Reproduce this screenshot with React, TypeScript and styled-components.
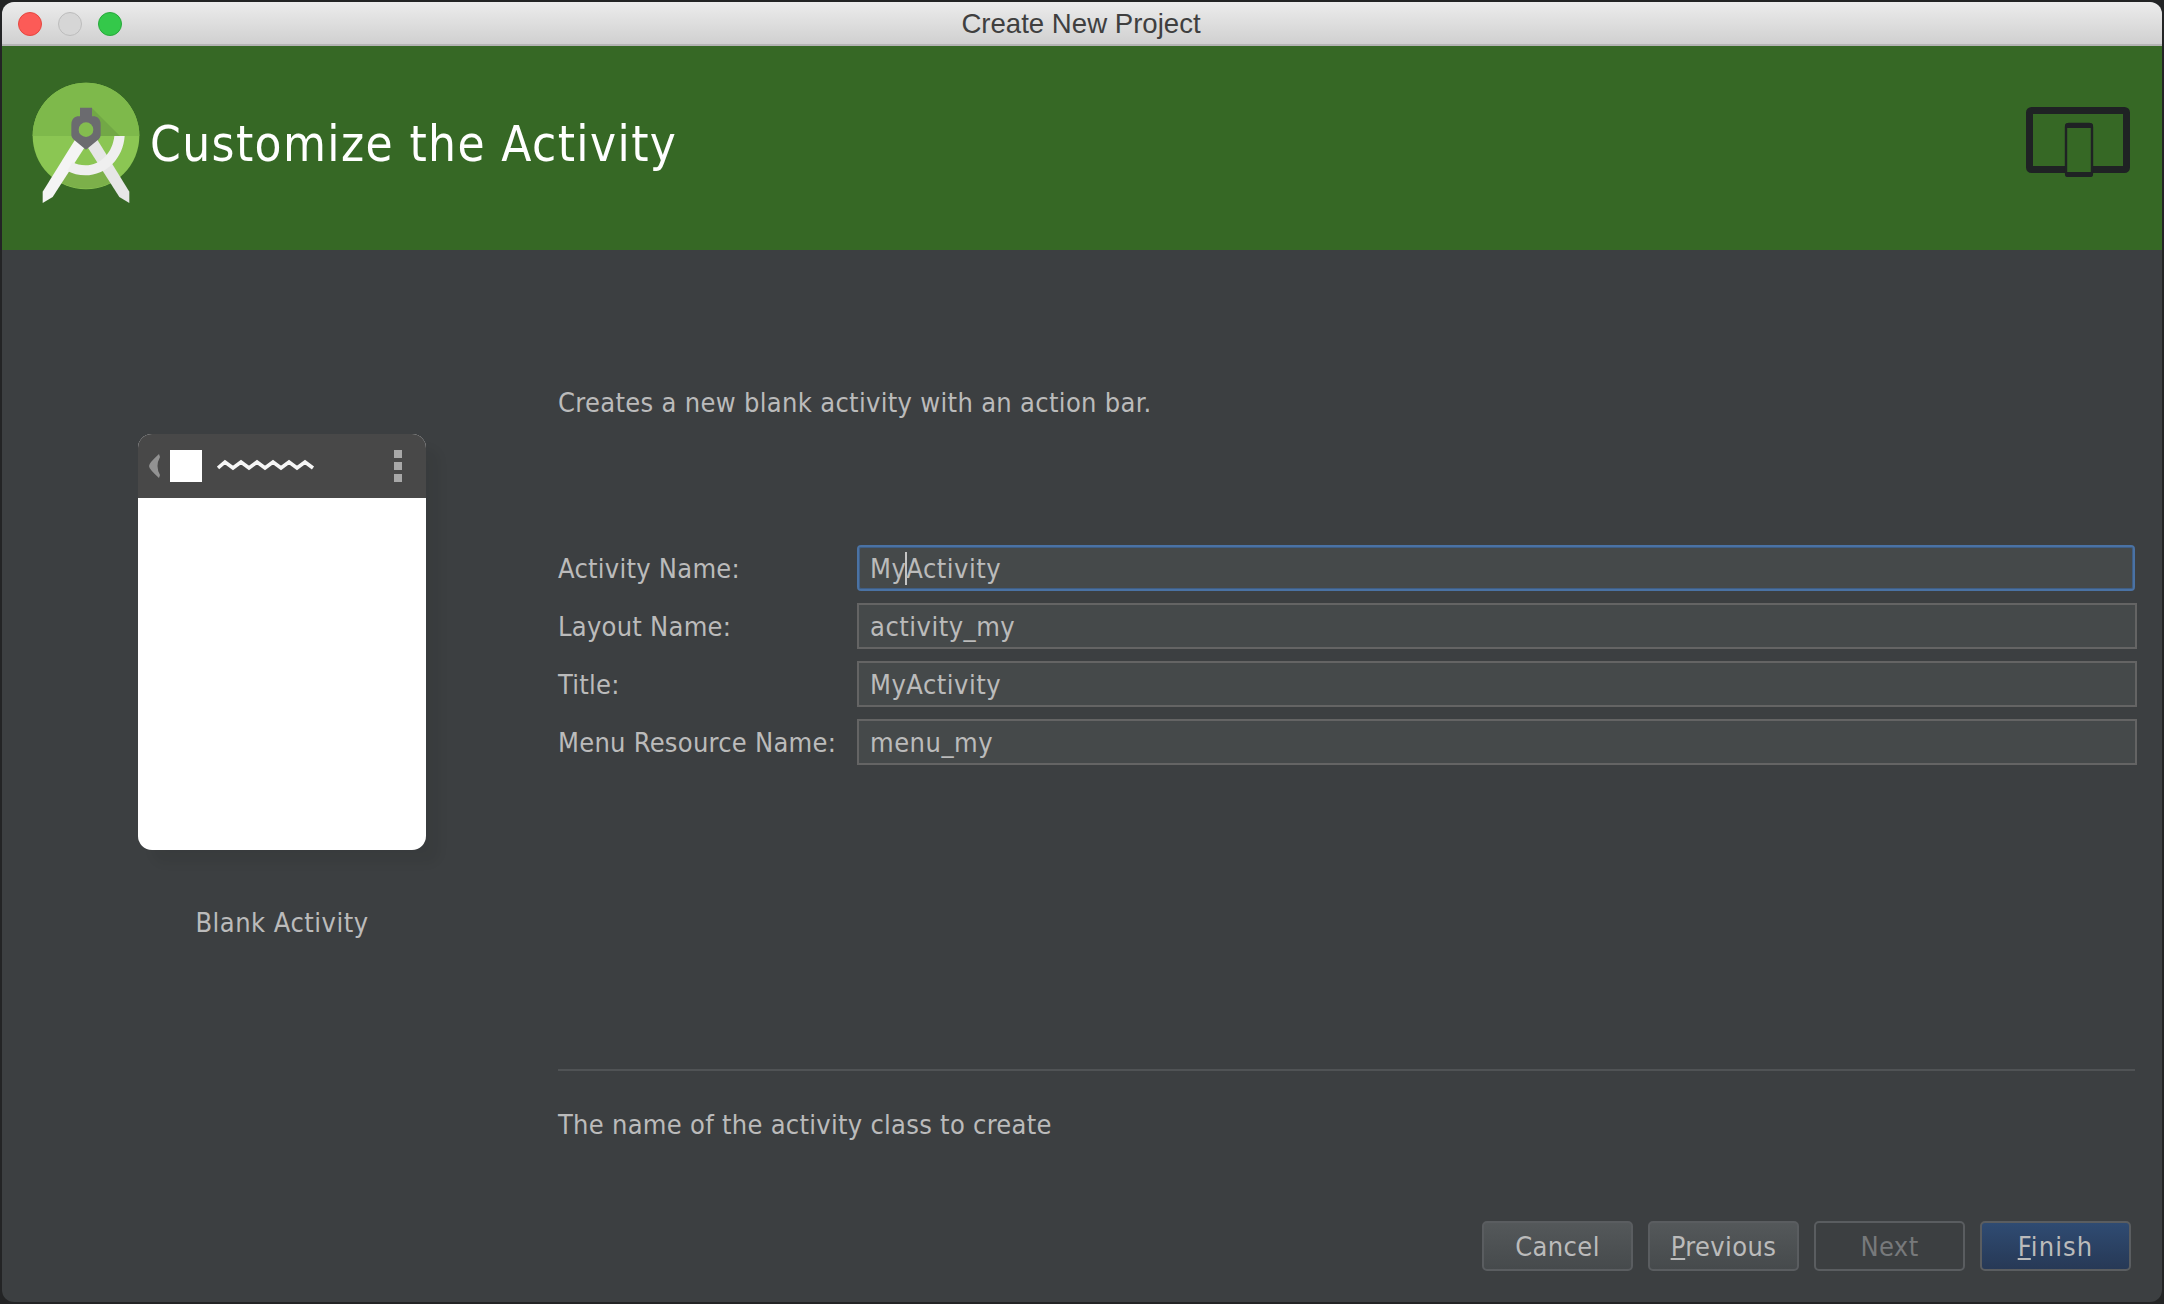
import React from "react";
import styled, { createGlobalStyle } from "styled-components";

const Global = createGlobalStyle`
  html, body { margin: 0; padding: 0; background: #232425; }
  body { width: 2164px; height: 1304px; overflow: hidden; }
`;

const uiFont = `"DejaVu Sans Condensed", "DejaVu Sans", sans-serif`;

const Desktop = styled.div`
  width: 2164px;
  height: 1304px;
  padding: 2px;
  box-sizing: border-box;
  background: #232425;
`;
const Win = styled.div`
  width: 2160px;
  height: 1300px;
  border-radius: 12px;
  overflow: hidden;
  display: flex;
  flex-direction: column;
  background: #3c3f41;
  font-family: ${uiFont};
  color: #bbbbbb;
`;
const TitleBar = styled.div`
  height: 44px;
  flex: none;
  box-sizing: border-box;
  display: grid;
  grid-template-columns: 1fr auto 1fr;
  align-items: center;
  padding: 2px 16px 0;
  background: linear-gradient(#ececec, #d0d0d0);
  border-bottom: 2px solid #b4b4b4;
`;
const Lights = styled.div`
  display: flex;
  gap: 16px;
`;
const Light = styled.span<{ $fill: string; $edge: string }>`
  width: 24px;
  height: 24px;
  box-sizing: border-box;
  border-radius: 50%;
  background: ${(p) => p.$fill};
  border: 1px solid ${(p) => p.$edge};
`;
const WinTitle = styled.div`
  font: 27.6px "Liberation Sans", Arial, sans-serif;
  color: #3f3f3f;
  margin-right: 2px;
`;
const Banner = styled.div`
  height: 204px;
  flex: none;
  display: flex;
  align-items: flex-start;
  background: #366825;
`;
const LogoSvg = styled.svg`
  width: 130px;
  height: 150px;
  margin: 25px 0 0 18px;
  flex: none;
`;
const Heading = styled.h1`
  margin: 69px 0 0;
  font: 400 49px ${uiFont};
  line-height: 60px;
  letter-spacing: 1.4px;
  color: #ffffff;
  flex: 1;
`;
const DeviceSvg = styled.svg`
  width: 104px;
  height: 70px;
  margin: 61px 32px 0 0;
  flex: none;
`;
const Body = styled.div`
  flex: 1;
  display: flex;
  min-height: 0;
`;
const Side = styled.div`
  width: 556px;
  flex: none;
  box-sizing: border-box;
  padding: 184px 0 0 136px;
`;
const Phone = styled.div`
  width: 288px;
  height: 416px;
  border-radius: 14px;
  overflow: hidden;
  display: flex;
  flex-direction: column;
  background: #ffffff;
  box-shadow: 14px 14px 10px rgba(0, 0, 0, 0.05);
`;
const PhoneBar = styled.div`
  height: 64px;
  flex: none;
  display: flex;
  align-items: center;
  box-sizing: border-box;
  padding: 0 24px 0 11px;
  background: #484848;
`;
const Chevron = styled.svg`
  width: 11px;
  height: 24px;
  flex: none;
`;
const Square = styled.div`
  width: 32px;
  height: 32px;
  margin-left: 10px;
  flex: none;
  background: #ffffff;
`;
const Wave = styled.svg`
  width: 98px;
  height: 14px;
  margin-left: 15px;
  flex: none;
`;
const Dots = styled.div`
  margin-left: auto;
  display: flex;
  flex-direction: column;
  gap: 4px;
`;
const Dot = styled.span`
  width: 8px;
  height: 8px;
  background: #a8a8a8;
`;
const Caption = styled.div`
  width: 288px;
  margin-top: 55px;
  text-align: center;
  font-size: 27px;
  line-height: 36px;
  letter-spacing: 0.5px;
`;
const Main = styled.div`
  flex: 1;
  box-sizing: border-box;
  padding: 135px 25px 31px 0;
  display: flex;
  flex-direction: column;
  min-width: 0;
`;
const Description = styled.div`
  font-size: 27px;
  line-height: 36px;
  letter-spacing: 0.32px;
`;
const Form = styled.div`
  margin-top: 124px;
  display: flex;
  flex-direction: column;
  gap: 12px;
`;
const Row = styled.div`
  display: flex;
  align-items: center;
`;
const Label = styled.div`
  width: 299px;
  flex: none;
  font-size: 27px;
  letter-spacing: 0.26px;
`;
const Field = styled.div<{ $focused?: boolean }>`
  flex: 1;
  height: 46px;
  box-sizing: border-box;
  padding: 0 11px;
  display: flex;
  align-items: center;
  font-size: 27px;
  letter-spacing: 0.5px;
  background: #45494a;
  border: 2px solid ${(p) => (p.$focused ? "#4a72a4" : "#646464")};
  border-radius: ${(p) => (p.$focused ? "4px" : "0")};
  margin-right: ${(p) => (p.$focused ? "2px" : "0")};
  ${(p) => (p.$focused ? "box-shadow: inset 0 0 0 1px #3f5e85;" : "")}
`;
const Caret = styled.span`
  display: inline-block;
  width: 0;
  height: 33px;
  border-left: 2px solid #c4c4c4;
  margin: 0 -1px;
  flex: none;
`;
const Rule = styled.div`
  height: 2px;
  margin: 304px 2px 0 0;
  background: #505355;
`;
const Help = styled.div`
  margin-top: 36px;
  font-size: 27px;
  line-height: 36px;
  letter-spacing: 0.28px;
`;
const Buttons = styled.div`
  margin-top: auto;
  padding-right: 6px;
  display: flex;
  justify-content: flex-end;
  gap: 15px;
`;
const Btn = styled.div<{ $kind?: "primary" | "disabled" }>`
  width: 151px;
  height: 50px;
  box-sizing: border-box;
  display: flex;
  align-items: center;
  justify-content: center;
  font-size: 27px;
  letter-spacing: ${(p) => (p.$kind === "primary" ? "1.1px" : "0.4px")};
  border-radius: 5px;
  border: 2px solid #5a5d60;
  color: ${(p) => (p.$kind === "disabled" ? "#77797b" : "#bbbbbb")};
  background: ${(p) =>
    p.$kind === "primary"
      ? "linear-gradient(#2f4b72, #273956)"
      : p.$kind === "disabled"
        ? "#3c3f41"
        : "linear-gradient(#54585a, #464a4c)"};
`;

function Logo() {
  return (
    <LogoSvg viewBox="0 0 390 450">
      <circle cx="198" cy="195" r="160" fill="#8bc653" />
      <path d="M38 195a160 160 0 0 1 320 0z" fill="#7eb94b" />
      <path d="M215 110 L300 195 L198 195 Z" fill="#72a846" />
      <path d="M100 320a160 160 0 0 0 196 0l-30-22H130z" fill="#7cb04a" />
      <path d="M165 206 L197 224 L98 378 L68 396 L68 362 Z" fill="#f4f4f4" />
      <path d="M232 206 L200 224 L298 378 L328 396 L328 362 Z" fill="#e6e6e6" />
      <path d="M283 195h31c-4 66-54 118-118 118-20 0-38-5-54-13l15-26c12 6 25 9 39 9 48 0 82-40 87-88z" fill="#efefef" />
      <path d="M180 110H216V136H224Q242 140 242 162V192Q242 200 236 205L198 236L160 205Q154 200 154 192V162Q154 140 172 136H180Z" fill="#6b6b6f" />
      <circle cx="198" cy="176" r="22" fill="#84bd4f" />
    </LogoSvg>
  );
}

function DeviceIcon() {
  return (
    <DeviceSvg viewBox="0 0 104 70">
      <rect x="3.5" y="3.5" width="97" height="59" rx="2" fill="none" stroke="#1f2224" strokeWidth="7" />
      <rect x="40" y="17" width="26" height="52" rx="3" fill="#366825" stroke="#1f2224" strokeWidth="2.4" />
      <rect x="39" y="16" width="28" height="5" rx="2.5" fill="#1f2224" />
      <rect x="39" y="65" width="28" height="5" rx="2.5" fill="#1f2224" />
    </DeviceSvg>
  );
}

export default function App() {
  return (
    <Desktop>
      <Global />
      <Win>
        <TitleBar>
          <Lights>
            <Light $fill="#fc5b57" $edge="#e5473f" />
            <Light $fill="#d6d6d6" $edge="#bcbcbc" />
            <Light $fill="#34c84a" $edge="#28a83b" />
          </Lights>
          <WinTitle>Create New Project</WinTitle>
        </TitleBar>
        <Banner>
          <Logo />
          <Heading>Customize the Activity</Heading>
          <DeviceIcon />
        </Banner>
        <Body>
          <Side>
            <Phone>
              <PhoneBar>
                <Chevron viewBox="0 0 11 24">
                  <path d="M10 0 L11 3 Q6 12 11 21 L10 24 Q0 15 0 12 Q0 9 10 0z" fill="#929292" />
                </Chevron>
                <Square />
                <Wave viewBox="0 0 98 14">
                  <path
                    d="M1 9 L8 3 L16 9 L24 3 L32 9 L40 3 L48 9 L56 3 L64 9 L72 3 L80 9 L88 3 L96 9"
                    fill="none"
                    stroke="#f6f6f6"
                    strokeWidth="3.6"
                  />
                </Wave>
                <Dots>
                  <Dot />
                  <Dot />
                  <Dot />
                </Dots>
              </PhoneBar>
            </Phone>
            <Caption>Blank Activity</Caption>
          </Side>
          <Main>
            <Description>Creates a new blank activity with an action bar.</Description>
            <Form>
              <Row>
                <Label>Activity Name:</Label>
                <Field $focused>
                  My
                  <Caret />
                  Activity
                </Field>
              </Row>
              <Row>
                <Label>Layout Name:</Label>
                <Field>activity_my</Field>
              </Row>
              <Row>
                <Label>Title:</Label>
                <Field>MyActivity</Field>
              </Row>
              <Row>
                <Label>Menu Resource Name:</Label>
                <Field>menu_my</Field>
              </Row>
            </Form>
            <Rule />
            <Help>The name of the activity class to create</Help>
            <Buttons>
              <Btn>Cancel</Btn>
              <Btn>
                <span>
                  <u>P</u>revious
                </span>
              </Btn>
              <Btn $kind="disabled">Next</Btn>
              <Btn $kind="primary">
                <span>
                  <u>F</u>inish
                </span>
              </Btn>
            </Buttons>
          </Main>
        </Body>
      </Win>
    </Desktop>
  );
}
